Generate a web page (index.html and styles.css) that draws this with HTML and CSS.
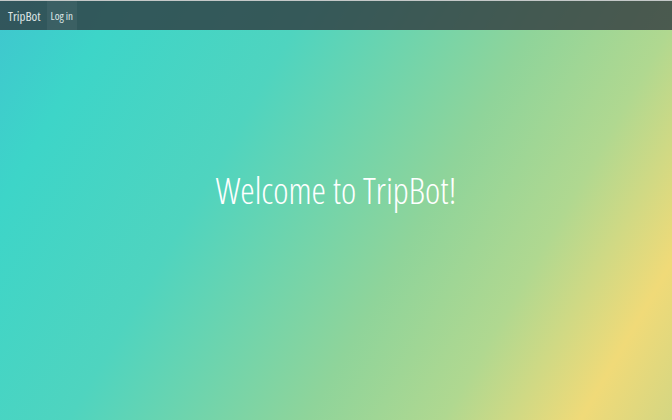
FILE: index.html
```html
<!DOCTYPE html>
<html>
<head>
<meta charset="utf-8">
<link rel="stylesheet" href="styles.css">
</head>
<body>
<div class="page">
  <nav class="navbar">
    <span class="brand">TripBot</span>
    <a class="nav-link active">Log in</a>
  </nav>
  <main class="hero">
    <h1 class="title">Welcome to TripBot!</h1>
  </main>
</div>
</body>
</html>
```

FILE: styles.css
```css
html, body {
  margin: 0;
  padding: 0;
  height: 100%;
}
body {
  font-family: "Open Sans", "Noto Sans", sans-serif;
  font-stretch: 75%;
  background: linear-gradient(120deg, #3fc6cf 0%, #3dd5c8 13%, #4fd4bf 34%, #8fd49a 60%, #b0d890 75%, #f0da78 90%, #d4d682 100%);
}
.page {
  height: 420px;
  display: flex;
  flex-direction: column;
  border-top: 1px solid #c4c8c8;
  box-sizing: border-box;
}
.navbar {
  height: 29px;
  display: flex;
  align-items: stretch;
  background: rgba(46, 54, 60, 0.78);
  padding-left: 8px;
}
.brand {
  color: #dfe6e6;
  font-size: 13px;
  display: flex;
  align-items: center;
  margin-right: 6px;
}
.nav-link {
  color: #dfe6e6;
  font-size: 11px;
  display: flex;
  align-items: center;
  padding: 0 4px;
}
.nav-link.active {
  background: rgba(255, 255, 255, 0.05);
}
.hero {
  flex: 1;
  display: flex;
  justify-content: center;
  padding-top: 136px;
}
.title {
  margin: 0;
  color: #ffffff;
  font-weight: 300;
  font-size: 36.4px;
  line-height: 48px;
  height: 48px;
}
```
